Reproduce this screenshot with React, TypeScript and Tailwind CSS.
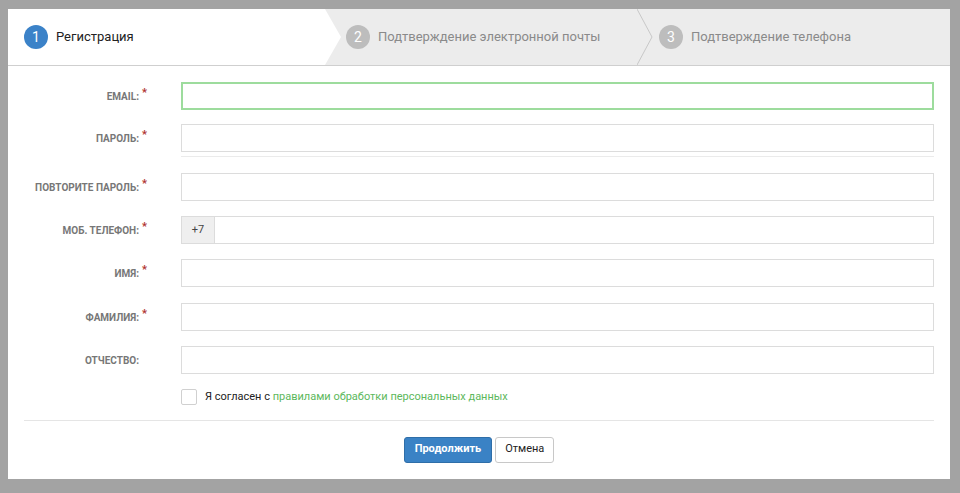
export default function App() {
  const rows: [string, boolean, number][] = [
    ["EMAIL:", true, 82],
    ["ПАРОЛЬ:", true, 124],
    ["ПОВТОРИТЕ ПАРОЛЬ:", true, 173],
    ["МОБ. ТЕЛЕФОН:", true, 216],
    ["ИМЯ:", true, 259],
    ["ФАМИЛИЯ:", true, 303],
    ["ОТЧЕСТВО:", false, 346],
  ];
  return (
    <div className="w-[960px] h-[493px] bg-[#a3a3a3] pt-[9px] pl-[8px]" style={{ fontFamily: "Roboto, 'Liberation Sans', sans-serif" }}>
      <div className="w-[942px] h-[470px] bg-white flex flex-col">
        <div className="relative h-[57px] bg-[#ececec] border-b border-[#cfcfcf] flex items-center text-[13px] shrink-0">
          <div className="absolute left-0 top-0 h-[56px] w-[333px] bg-white [clip-path:polygon(0_0,317px_0,333px_50%,317px_100%,0_100%)]" />
          <svg className="absolute left-[629px] top-0" width="16" height="56"><polyline points="0,0 15,28 0,56" fill="none" stroke="#c8c8c8" strokeWidth="1" /></svg>
          <div className="relative flex items-center gap-[8px] pl-[16px] w-[330px]">
            <span className="w-[24px] h-[24px] rounded-full bg-[#3b82c8] text-white flex items-center justify-center text-[14px]">1</span>
            <span className="text-[#222]">Регистрация</span>
          </div>
          <div className="relative flex items-center gap-[8px] pl-[8px] w-[313px]">
            <span className="w-[24px] h-[24px] rounded-full bg-[#bdbdbd] text-white flex items-center justify-center text-[14px]">2</span>
            <span className="text-[#8a8a8a]">Подтверждение электронной почты</span>
          </div>
          <div className="relative flex items-center gap-[8px] pl-[8px]">
            <span className="w-[24px] h-[24px] rounded-full bg-[#bdbdbd] text-white flex items-center justify-center text-[14px]">3</span>
            <span className="text-[#8a8a8a]">Подтверждение телефона</span>
          </div>
        </div>
        <div className="flex flex-col pt-[16px]">
          {rows.map(([label, req, y], i) => {
            const next = rows[i + 1];
            const gap = next ? next[2] - y - 28 : 0;
            return (
              <div key={label} className="flex items-start" style={{ marginBottom: gap }}>
                <div className="w-[173px] flex justify-end pr-[42px] pt-[7px] text-[10px] font-bold text-[#777] relative">
                  {label}
                  {req && <span className="absolute right-[34px] top-[3px] text-[#b03030] text-[11px]">*</span>}
                </div>
                <div className="w-[753px] relative">
                  {i === 3 ? (
                    <div className="flex h-[28px] border border-[#dcdcdc]">
                      <span className="w-[33px] bg-[#efefef] border-r border-[#dcdcdc] text-[11px] text-[#444] flex items-center justify-center">+7</span>
                      <span className="flex-1" />
                    </div>
                  ) : (
                    <div className={`h-[28px] border ${i === 0 ? "border-[#9ddc9d] border-2" : "border-[#dcdcdc]"}`} />
                  )}
                  {i === 1 && <div className="absolute left-0 right-0 top-[32px] h-px bg-[#ebebeb]" />}
                </div>
              </div>
            );
          })}
          <div className="flex items-center ml-[173px] mt-[15px] gap-[8px] text-[11px]">
            <span className="w-[16px] h-[16px] border border-[#d0d0d0] rounded-[2px] bg-white" />
            <span className="text-[#222]">Я согласен с <span className="text-[#5cb85c]">правилами обработки персональных данных</span></span>
          </div>
          <div className="mx-[16px] mt-[14px] h-px bg-[#e5e5e5]" />
          <div className="flex justify-center gap-[3px] mt-[16px]">
            <button className="h-[26px] px-[10px] rounded-[3px] bg-[#3a82c5] border border-[#2f6ea8] text-white text-[11px] font-bold">Продолжить</button>
            <button className="h-[26px] px-[9px] rounded-[3px] bg-white border border-[#c8c8c8] text-[#222] text-[11px]">Отмена</button>
          </div>
        </div>
      </div>
    </div>
  );
}
